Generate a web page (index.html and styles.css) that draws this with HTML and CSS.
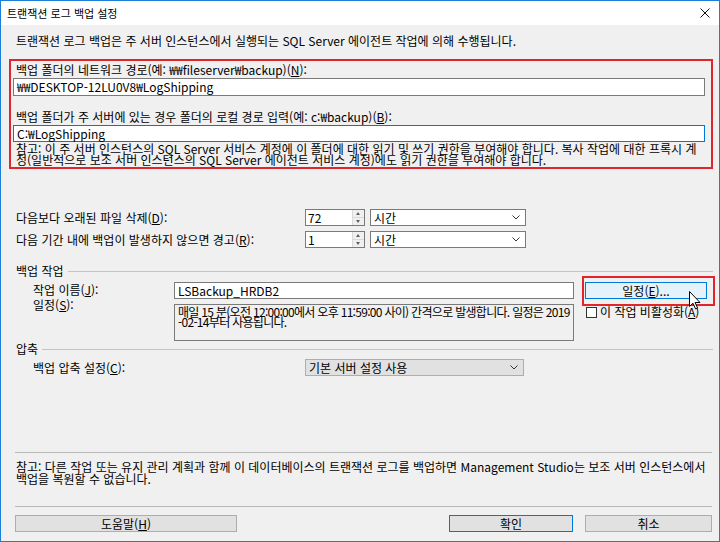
FILE: index.html
```html
<!DOCTYPE html>
<html lang="ko">
<head>
    <meta charset="UTF-8">
    <meta name="viewport" content="width=device-width, initial-scale=1.0">
    <title>트랜잭션 로그 백업 설정</title>
    <link rel="stylesheet" href="styles.css">
</head>
<body>
    <div class="window">
        <div class="titlebar">
            <span class="title">트랜잭션 로그 백업 설정</span>
            <svg class="close" width="10" height="10" viewBox="0 0 10 10"><path d="M0.5 0.5L9.5 9.5M9.5 0.5L0.5 9.5" stroke="#111" stroke-width="1"/></svg>
        </div>
        <div class="content">
            <p class="intro">트랜잭션 로그 백업은 주 서버 인스턴스에서 실행되는 SQL Server 에이전트 작업에 의해 수행됩니다.</p>

            <div class="highlight">
                <div class="hl-label">백업 폴더의 네트워크 경로(예: ₩₩fileserver₩backup)(<u>N</u>):</div>
                <div class="textbox">₩₩DESKTOP-12LU0V8₩LogShipping</div>
                <div class="hl-label second">백업 폴더가 주 서버에 있는 경우 폴더의 로컬 경로 입력(예: c:₩backup)(<u>B</u>):</div>
                <div class="textbox focus">C:₩LogShipping</div>
                <p class="note">참고: 이 주 서버 인스턴스의 SQL Server 서비스 계정에 이 폴더에 대한 읽기 및 쓰기 권한을 부여해야 합니다. 복사 작업에 대한 프록시 계정(일반적으로 보조 서버 인스턴스의 SQL Server 에이전트 서비스 계정)에도 읽기 권한을 부여해야 합니다.</p>
            </div>

            <div class="row first">
                <span class="row-label">다음보다 오래된 파일 삭제(<u>D</u>):</span>
                <div class="spin"><span class="spin-value">72</span><span class="spin-btns"><i class="up"></i><i class="down"></i></span></div>
                <div class="combo">시간<svg width="8" height="5" viewBox="0 0 8 5"><path d="M0.5 0.5L4 4L7.5 0.5" fill="none" stroke="#333"/></svg></div>
            </div>
            <div class="row second">
                <span class="row-label">다음 기간 내에 백업이 발생하지 않으면 경고(<u>R</u>):</span>
                <div class="spin"><span class="spin-value">1</span><span class="spin-btns"><i class="up"></i><i class="down"></i></span></div>
                <div class="combo">시간<svg width="8" height="5" viewBox="0 0 8 5"><path d="M0.5 0.5L4 4L7.5 0.5" fill="none" stroke="#333"/></svg></div>
            </div>

            <div class="group-head">백업 작업</div>
            <div class="job">
                <div class="job-labels">
                    <span>작업 이름(<u>J</u>):</span>
                    <span>일정(<u>S</u>):</span>
                </div>
                <div class="job-fields">
                    <div class="field">LSBackup_HRDB2</div>
                    <div class="schedule">매일 15 분(오전 12:00:00에서 오후 11:59:00 사이) 간격으로 발생합니다. 일정은 2019<br>-02-14부터 사용됩니다.</div>
                </div>
                <div class="job-side">
                    <div class="btn-schedule">일정(<u>E</u>)...
                        <svg class="cursor" width="12" height="19" viewBox="0 0 12 19"><path d="M0.5 0.5V15.5L4 12.2L6.6 18L8.6 17.1L6.1 11.5H11Z" fill="#fff" stroke="#000" stroke-width="1" stroke-linejoin="round"/></svg>
                    </div>
                    <label class="check"><span class="box"></span><span>이 작업 비활성화(<u>A</u>)</span></label>
                </div>
            </div>

            <div class="group-head small">압축</div>
            <div class="comp-row">
                <span class="comp-label">백업 압축 설정(<u>C</u>):</span>
                <div class="combo flat">기본 서버 설정 사용<svg width="8" height="5" viewBox="0 0 8 5"><path d="M0.5 0.5L4 4L7.5 0.5" fill="none" stroke="#333"/></svg></div>
            </div>

            <div class="sep"></div>
            <p class="note2">참고: 다른 작업 또는 유지 관리 계획과 함께 이 데이터베이스의 트랜잭션 로그를 백업하면 Management Studio는 보조 서버 인스턴스에서 백업을 복원할 수 없습니다.</p>
            <div class="sep bottom"></div>

            <div class="footer">
                <div class="btn help">도움말(<u>H</u>)</div>
                <div class="btn ok">확인</div>
                <div class="btn cancel">취소</div>
            </div>
        </div>
    </div>
</body>
</html>
```

FILE: styles.css
```css
*{margin: 0; padding: 0; box-sizing: border-box;}
body{
    width: 720px;
    height: 542px;
    overflow: hidden;
    font-family: "Noto Sans CJK KR", sans-serif;
    font-size: 12px;
    line-height: 12px;
    color: #000;
}
u{text-decoration: underline; text-underline-offset: 1px;}
.window{
    width: 720px;
    height: 542px;
    border: 1px solid #1b7fd8;
    background: #f0f0f0;
}
.titlebar{
    height: 24px;
    background: #fff;
    display: flex;
    align-items: center;
    justify-content: space-between;
    padding: 0 9px 0 6px;
}
.title{font-size: 11px;}
.content{
    padding: 10px 6px 0 8px;
}
.intro{padding-left: 7px;}
.note, .note2{word-break: break-all;}

/* 빨간 강조 박스 */
.highlight{
    margin-top: 12px;
    border: 2px solid #e0252c;
    padding: 3px 6px 0 2px;
    height: 110px;
}
.hl-label{padding-left: 3px;}
.hl-label.second{margin-top: 15px;}
.textbox{
    height: 18px;
    margin-top: 2px;
    border: 1px solid #7a7a7a;
    background: #fff;
    padding: 0 3px;
    line-height: 16px;
}
.textbox.focus{
    height: 17px;
    border-color: #0078d7;
    line-height: 15px;
}
.note{
    padding-left: 3px;
    margin-top: 1px;
    line-height: 11px;
}

/* 보존 기간 */
.row{
    display: flex;
    align-items: center;
    height: 17px;
    padding-left: 7px;
}
.row.first{margin-top: 40px;}
.row.second{margin-top: 5px;}
.row-label{width: 289px;}
.spin{
    width: 60px;
    height: 17px;
    display: flex;
    border: 1px solid #7a7a7a;
    background: #fff;
}
.spin-value{
    flex: 1;
    padding-left: 2px;
    line-height: 15px;
}
.spin-btns{
    width: 12px;
    display: flex;
    flex-direction: column;
    border-left: 1px solid #d9d9d9;
}
.spin-btns i{
    flex: 1;
    background: #f0f0f0;
    position: relative;
}
.spin-btns i.up{border-bottom: 1px solid #d9d9d9;}
.spin-btns i::after{
    content: "";
    position: absolute;
    left: 3px;
    border-left: 2.5px solid transparent;
    border-right: 2.5px solid transparent;
}
.spin-btns i.up::after{top: 2px; border-bottom: 3px solid #606060;}
.spin-btns i.down::after{top: 2px; border-top: 3px solid #606060;}
.combo{
    margin-left: 5px;
    width: 156px;
    height: 17px;
    border: 1px solid #7a7a7a;
    background: #fff;
    display: flex;
    align-items: center;
    justify-content: space-between;
    padding: 0 5px 0 3px;
}
.combo.flat{
    margin-left: 0;
    width: 219px;
    background: #e1e1e1;
    border-color: #adadad;
}

/* 그룹 제목 */
.group-head{
    display: flex;
    align-items: center;
    height: 12px;
    margin-top: 17px;
    padding-left: 7px;
}
.group-head::after{
    content: "";
    flex: 1;
    margin-left: 4px;
    border-top: 1px solid #c4c4c4;
}
.group-head.small{margin-top: 2px;}

.job{
    display: flex;
    margin-top: 5px;
}
.job-labels{
    width: 165px;
    padding-left: 24px;
    display: flex;
    flex-direction: column;
    line-height: 15px;
}
.job-fields{
    width: 400px;
    display: flex;
    flex-direction: column;
    gap: 5px;
}
.field{
    height: 17px;
    border: 1px solid #7a7a7a;
    background: #fff;
    padding: 0 3px;
    line-height: 15px;
}
.schedule{
    height: 37px;
    border: 1px solid #7a7a7a;
    padding: 2px 2px 2px 3px;
    line-height: 10px;
    letter-spacing: -0.7px;
    white-space: nowrap;
    overflow: hidden;
}
.job-side{
    margin-left: 11px;
    width: 127px;
}
.btn-schedule{
    position: relative;
    width: 122px;
    height: 17px;
    background: #e5f1fb;
    border: 1px solid #0078d7;
    text-align: center;
    line-height: 15px;
}
.btn-schedule::after{
    content: "";
    position: absolute;
    left: -4px;
    top: -7px;
    right: -9px;
    bottom: -8px;
    border: 2px solid #e0252c;
}
.cursor{
    position: absolute;
    left: 103px;
    top: 8px;
    z-index: 2;
}
.check{
    display: flex;
    align-items: center;
    gap: 3px;
    margin-top: 7px;
    padding-left: 1px;
    white-space: nowrap;
}
.check .box{
    width: 11px;
    height: 11px;
    flex: none;
    border: 1px solid #333;
    background: #fff;
}

.comp-row{
    display: flex;
    align-items: center;
    height: 17px;
    margin-top: 4px;
    padding-left: 24px;
}
.comp-label{width: 272px;}

.sep{
    margin: 76px 1px 0 6px;
    border-top: 1px solid #b9b9b9;
}
.sep.bottom{margin-top: 21px;}
.note2{
    padding-left: 7px;
    margin-top: 8px;
}
.footer{
    display: flex;
    margin-top: 8px;
    padding: 0 1px 0 6px;
}
.btn{
    height: 17px;
    background: #e1e1e1;
    border: 1px solid #adadad;
    text-align: center;
    line-height: 15px;
}
.btn.help{width: 222px;}
.btn.ok{
    width: 124px;
    margin-left: auto;
    border-color: #0078d7;
}
.btn.cancel{
    width: 127px;
    margin-left: 12px;
}
```
